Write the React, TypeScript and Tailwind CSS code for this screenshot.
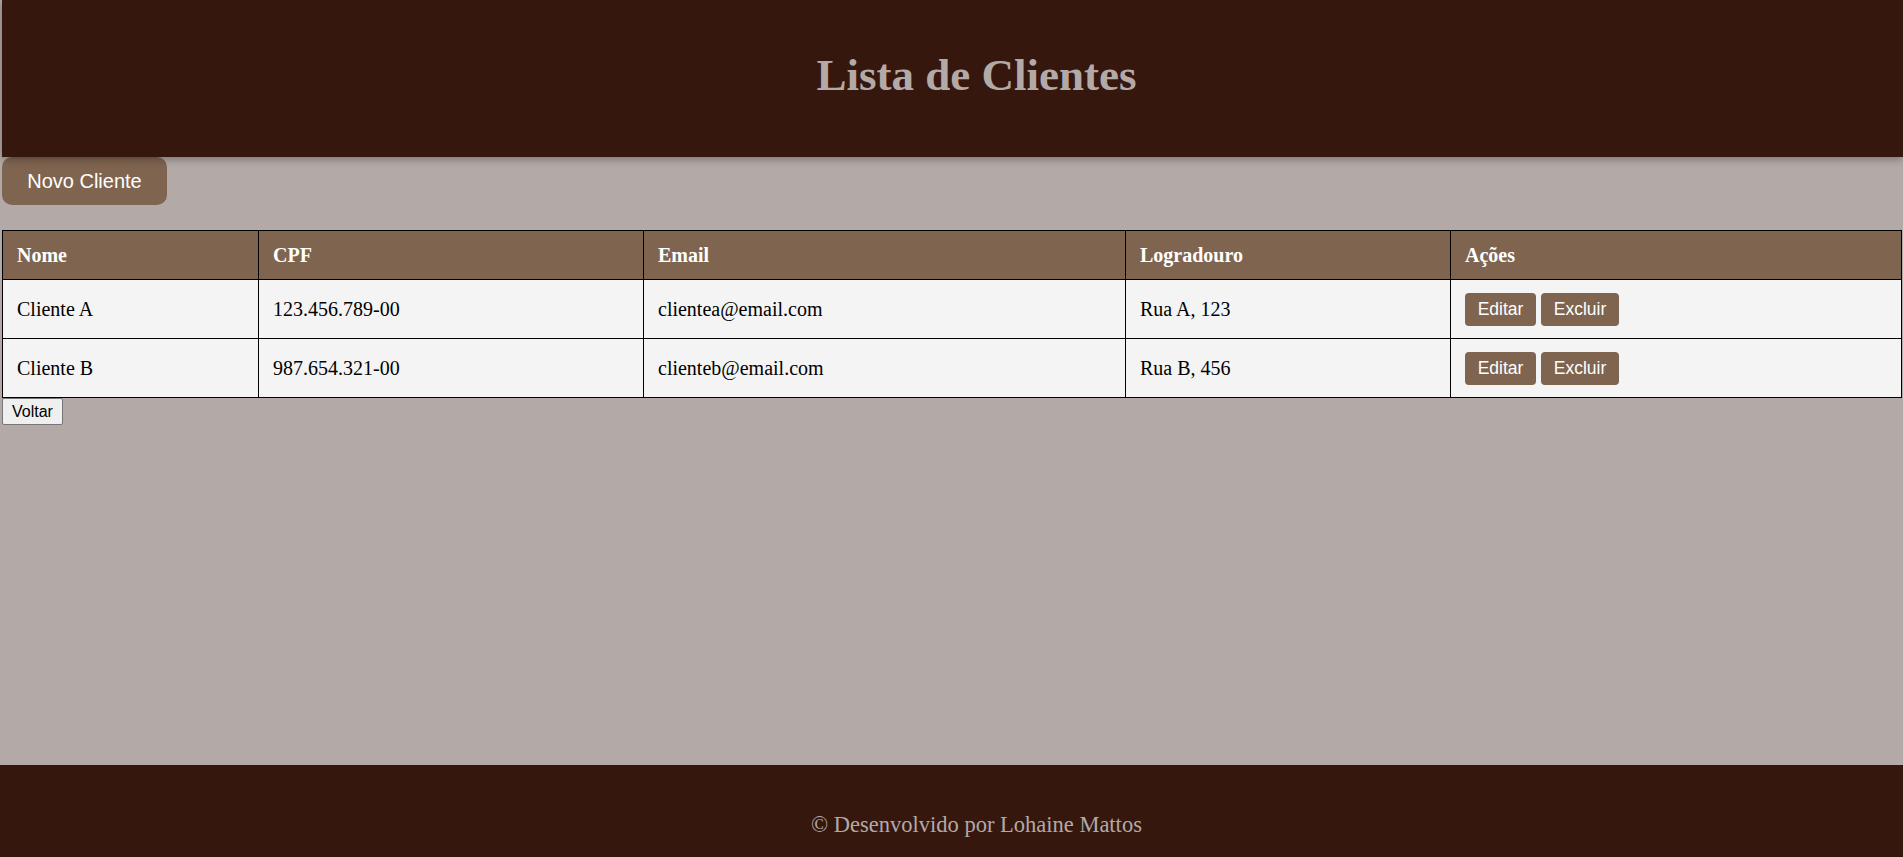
import React from 'react';

const clientes = [
  { nome: 'Cliente A', cpf: '123.456.789-00', email: 'clientea@email.com', logradouro: 'Rua A, 123' },
  { nome: 'Cliente B', cpf: '987.654.321-00', email: 'clienteb@email.com', logradouro: 'Rua B, 456' },
];

const cell = 'border border-black px-[14px] text-left';

export default function App() {
  return (
    <div className="min-h-[857px] bg-[#b3aaa7] text-[20px] text-black" style={{ fontFamily: '"Liberation Serif", "Times New Roman", serif' }}>
      <div className="pl-[2px]">
        <header className="h-[157px] bg-[#36170e] flex items-center justify-center shadow-[0_2px_8px_rgba(0,0,0,0.35)] relative">
          <h1 className="text-[45px] font-bold text-[#b3aaa7] -mt-[6px] ml-[48px]">Lista de Clientes</h1>
        </header>

        <button className="h-[48px] w-[165px] rounded-[10px] bg-[#7f6550] text-white text-[20px]" style={{ fontFamily: '"Liberation Sans", Arial, sans-serif' }}>
          Novo Cliente
        </button>

        <table className="mt-[25px] w-[1900px] border-collapse">
          <thead>
            <tr className="h-[49px] bg-[#7f6550] text-white">
              <th className={`${cell} w-[256px]`}>Nome</th>
              <th className={`${cell} w-[385px]`}>CPF</th>
              <th className={`${cell} w-[482px]`}>Email</th>
              <th className={`${cell} w-[325px]`}>Logradouro</th>
              <th className={cell}>Ações</th>
            </tr>
          </thead>
          <tbody>
            {clientes.map((c) => (
              <tr key={c.cpf} className="h-[59px] bg-[#f4f4f4]">
                <td className={cell}>{c.nome}</td>
                <td className={cell}>{c.cpf}</td>
                <td className={cell}>{c.email}</td>
                <td className={cell}>{c.logradouro}</td>
                <td className={cell}>
                  <div className="flex gap-[5px]" style={{ fontFamily: '"Liberation Sans", Arial, sans-serif' }}>
                    <button className="h-[33px] w-[71px] rounded-[4px] bg-[#7f6550] text-white text-[17.5px]">Editar</button>
                    <button className="h-[33px] w-[78px] rounded-[4px] bg-[#7f6550] text-white text-[17.5px]">Excluir</button>
                  </div>
                </td>
              </tr>
            ))}
          </tbody>
        </table>

        <button
          className="block h-[27px] w-[61px] border border-[#767676] rounded-[2px] bg-[#efefef] text-[16px] text-black"
          style={{ fontFamily: '"Liberation Sans", Arial, sans-serif' }}
        >
          Voltar
        </button>
      </div>

      <footer className="fixed bottom-0 left-0 right-0 h-[92px] bg-[#36170e] flex justify-center pt-[49px]">
        <p className="text-[#b3aaa7] text-[22.5px] leading-none ml-[50px]">© Desenvolvido por Lohaine Mattos</p>
      </footer>
    </div>
  );
}
